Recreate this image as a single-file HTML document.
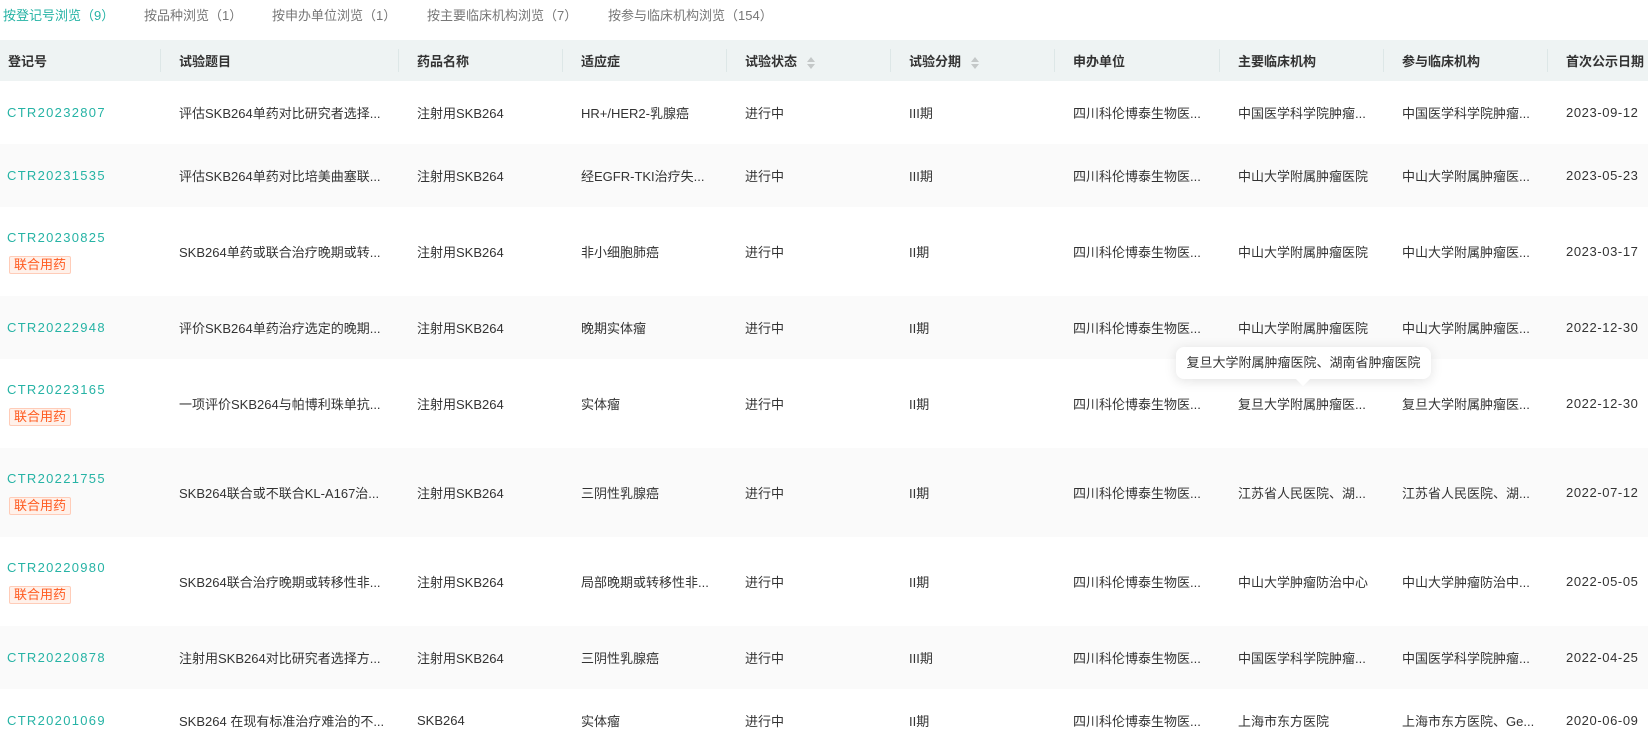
<!DOCTYPE html>
<html><head><meta charset="utf-8"><style>
*{margin:0;padding:0;box-sizing:border-box}
body{width:1648px;height:744px;overflow:hidden;background:#fff;font-family:"Liberation Sans","Noto Sans CJK SC",sans-serif;font-size:13px;color:#333;position:relative}
.tabs{position:absolute;top:5px;left:3px;height:18px;display:flex;font-size:13px;color:#777;white-space:nowrap}
.tabs span{position:absolute;top:0}
.tabs span:first-child{color:#26b3a5}
table{position:absolute;top:40px;left:0;border-collapse:collapse;table-layout:fixed;width:1648px}
th{background:#eef3f3;height:41px;text-align:left;font-weight:bold;padding:0 0 0 8px;position:relative;color:#333;white-space:nowrap}
th+th{padding-left:19px}
th+th:before{content:"";position:absolute;left:0;top:9px;height:23px;border-left:1px solid #dde7e7}
td{padding:0 0 0 19px;white-space:nowrap;overflow:visible}
td:first-child{padding-left:7px}
td:last-child{letter-spacing:0.6px}
tr.s td{height:63px}tr.t td{height:89px}
tr.g td{background:#fafafa}
a{color:#26b3a5;text-decoration:none;display:block;letter-spacing:1.3px}
.tag{display:inline-block;margin-top:11px;margin-left:2px;border:1px solid #ffccb8;background:#fff1ea;color:#ff5a1f;font-size:13px;line-height:16px;padding:0 4px;border-radius:2px}
.sort{display:inline-block;vertical-align:middle;margin-left:10px;width:8px;height:12px;position:relative}
.sort:before,.sort:after{content:"";position:absolute;left:0;border-left:4px solid transparent;border-right:4px solid transparent}
.sort:before{top:0;border-bottom:5px solid #c4c8c8}
.sort:after{bottom:0;border-top:5px solid #c4c8c8}
.tip{position:absolute;left:1176px;top:347px;width:255px;height:32px;background:#fff;border-radius:8px;box-shadow:0 2px 12px rgba(0,0,0,.12);font-size:13px;line-height:32px;text-align:center;color:#333}
.tip:after{content:"";position:absolute;left:122px;bottom:-5px;width:10px;height:10px;background:#fff;transform:rotate(45deg)}
</style></head><body>
<div class="tabs"><span style="left:0">按登记号浏览（9）</span><span style="left:141px">按品种浏览（1）</span><span style="left:269px">按申办单位浏览（1）</span><span style="left:424px">按主要临床机构浏览（7）</span><span style="left:605px">按参与临床机构浏览（154）</span></div>
<table>
<colgroup><col style="width:160px"><col style="width:238px"><col style="width:164px"><col style="width:164px"><col style="width:164px"><col style="width:164px"><col style="width:165px"><col style="width:164px"><col style="width:164px"><col style="width:101px"></colgroup>
<tr><th>登记号</th><th>试验题目</th><th>药品名称</th><th>适应症</th><th>试验状态<span class="sort"></span></th><th>试验分期<span class="sort"></span></th><th>申办单位</th><th>主要临床机构</th><th>参与临床机构</th><th style="letter-spacing:0">首次公示日期</th></tr>
<tr class="s"><td><a>CTR20232807</a></td><td>评估SKB264单药对比研究者选择...</td><td>注射用SKB264</td><td>HR+/HER2-乳腺癌</td><td>进行中</td><td>III期</td><td>四川科伦博泰生物医...</td><td>中国医学科学院肿瘤...</td><td>中国医学科学院肿瘤...</td><td>2023-09-12</td></tr>
<tr class="s g"><td><a>CTR20231535</a></td><td>评估SKB264单药对比培美曲塞联...</td><td>注射用SKB264</td><td>经EGFR-TKI治疗失...</td><td>进行中</td><td>III期</td><td>四川科伦博泰生物医...</td><td>中山大学附属肿瘤医院</td><td>中山大学附属肿瘤医...</td><td>2023-05-23</td></tr>
<tr class="t"><td><a>CTR20230825</a><span class="tag">联合用药</span></td><td>SKB264单药或联合治疗晚期或转...</td><td>注射用SKB264</td><td>非小细胞肺癌</td><td>进行中</td><td>II期</td><td>四川科伦博泰生物医...</td><td>中山大学附属肿瘤医院</td><td>中山大学附属肿瘤医...</td><td>2023-03-17</td></tr>
<tr class="s g"><td><a>CTR20222948</a></td><td>评价SKB264单药治疗选定的晚期...</td><td>注射用SKB264</td><td>晚期实体瘤</td><td>进行中</td><td>II期</td><td>四川科伦博泰生物医...</td><td>中山大学附属肿瘤医院</td><td>中山大学附属肿瘤医...</td><td>2022-12-30</td></tr>
<tr class="t"><td><a>CTR20223165</a><span class="tag">联合用药</span></td><td>一项评价SKB264与帕博利珠单抗...</td><td>注射用SKB264</td><td>实体瘤</td><td>进行中</td><td>II期</td><td>四川科伦博泰生物医...</td><td>复旦大学附属肿瘤医...</td><td>复旦大学附属肿瘤医...</td><td>2022-12-30</td></tr>
<tr class="t g"><td><a>CTR20221755</a><span class="tag">联合用药</span></td><td>SKB264联合或不联合KL-A167治...</td><td>注射用SKB264</td><td>三阴性乳腺癌</td><td>进行中</td><td>II期</td><td>四川科伦博泰生物医...</td><td>江苏省人民医院、湖...</td><td>江苏省人民医院、湖...</td><td>2022-07-12</td></tr>
<tr class="t"><td><a>CTR20220980</a><span class="tag">联合用药</span></td><td>SKB264联合治疗晚期或转移性非...</td><td>注射用SKB264</td><td>局部晚期或转移性非...</td><td>进行中</td><td>II期</td><td>四川科伦博泰生物医...</td><td>中山大学肿瘤防治中心</td><td>中山大学肿瘤防治中...</td><td>2022-05-05</td></tr>
<tr class="s g"><td><a>CTR20220878</a></td><td>注射用SKB264对比研究者选择方...</td><td>注射用SKB264</td><td>三阴性乳腺癌</td><td>进行中</td><td>III期</td><td>四川科伦博泰生物医...</td><td>中国医学科学院肿瘤...</td><td>中国医学科学院肿瘤...</td><td>2022-04-25</td></tr>
<tr class="s"><td><a>CTR20201069</a></td><td>SKB264 在现有标准治疗难治的不...</td><td>SKB264</td><td>实体瘤</td><td>进行中</td><td>II期</td><td>四川科伦博泰生物医...</td><td>上海市东方医院</td><td>上海市东方医院、Ge...</td><td>2020-06-09</td></tr>
</table>
<div class="tip">复旦大学附属肿瘤医院、湖南省肿瘤医院</div>
</body></html>
